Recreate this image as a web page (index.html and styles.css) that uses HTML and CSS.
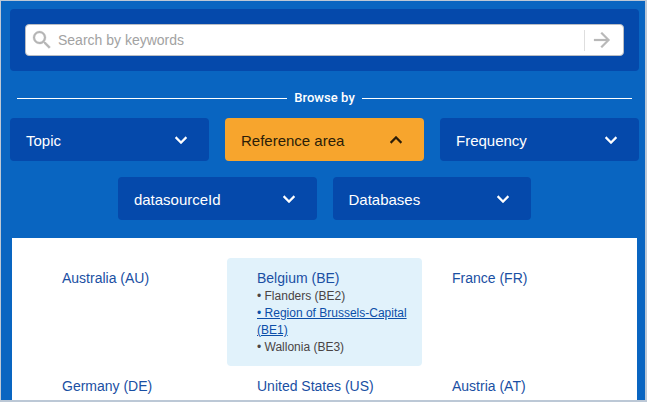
FILE: index.html
```
<!DOCTYPE html>
<html lang="en">
<head>
<meta charset="utf-8">
<title>Data Explorer</title>
<link rel="stylesheet" href="styles.css">
</head>
<body>
<main class="page">
  <form class="search">
    <div class="search-box">
      <svg class="search-icon" viewBox="0 0 24 24"><path d="M15.5 14h-.79l-.28-.27A6.47 6.47 0 0 0 16 9.5 6.5 6.5 0 1 0 9.5 16c1.61 0 3.09-.59 4.23-1.57l.27.28v.79l5 4.99L20.49 19l-4.99-5zm-6 0C7.01 14 5 11.99 5 9.5S7.01 5 9.5 5 14 7.01 14 9.5 11.99 14 9.5 14z"/></svg>
      <span class="placeholder">Search by keywords</span>
      <span class="submit"><svg viewBox="0 0 24 24"><path d="M12 4l-1.41 1.41L16.17 11H4v2h12.17l-5.58 5.59L12 20l8-8z"/></svg></span>
    </div>
  </form>
  <div class="divider"><span>Browse by</span></div>
  <nav class="facets">
    <div class="facet"><span>Topic</span><svg viewBox="0 0 24 24"><path d="M7.41 8.59L12 13.17l4.59-4.58L18 10l-6 6-6-6z"/></svg></div>
    <div class="facet active"><span>Reference area</span><svg viewBox="0 0 24 24"><path d="M12 8l-6 6 1.41 1.41L12 10.83l4.59 4.58L18 14z"/></svg></div>
    <div class="facet"><span>Frequency</span><svg viewBox="0 0 24 24"><path d="M7.41 8.59L12 13.17l4.59-4.58L18 10l-6 6-6-6z"/></svg></div>
    <div class="facet"><span>datasourceId</span><svg viewBox="0 0 24 24"><path d="M7.41 8.59L12 13.17l4.59-4.58L18 10l-6 6-6-6z"/></svg></div>
    <div class="facet"><span>Databases</span><svg viewBox="0 0 24 24"><path d="M7.41 8.59L12 13.17l4.59-4.58L18 10l-6 6-6-6z"/></svg></div>
  </nav>
  <section class="results">
    <div class="area"><div class="name">Australia (AU)</div></div>
    <div class="area selected">
      <div class="name">Belgium (BE)</div>
      <div class="sub">• Flanders (BE2)</div>
      <div class="sub link">• Region of Brussels-Capital (BE1)</div>
      <div class="sub">• Wallonia (BE3)</div>
    </div>
    <div class="area"><div class="name">France (FR)</div></div>
    <div class="area"><div class="name">Germany (DE)</div></div>
    <div class="area"><div class="name">United States (US)</div></div>
    <div class="area"><div class="name">Austria (AT)</div></div>
  </section>
</main>
</body>
</html>
```
FILE: styles.css
```
* { box-sizing: border-box; }
body { margin: 0; font-family: "Liberation Sans", Arial, sans-serif; }
.page {
  width: 647px;
  height: 402px;
  overflow: hidden;
  padding: 8px 7px 0 9px;
  border: 1px solid #bcc8d6;
  border-right-width: 2px;
  border-bottom-width: 2px;
  background: #0965c1;
}
.search {
  width: 629px;
  height: 62px;
  padding: 15px;
  border-radius: 4px;
  background: #0549ab;
}
.search-box {
  display: flex;
  align-items: center;
  width: 599px;
  height: 32px;
  padding-left: 4px;
  border: 1px solid #b9bdc4;
  border-radius: 4px;
  background: #fff;
}
.search-icon { width: 24px; height: 24px; fill: #b5b5b5; stroke: #b5b5b5; stroke-width: .3; }
.placeholder { flex: 1; margin-left: 4px; font-size: 14px; color: #a2a2a2; }
.submit {
  display: flex;
  align-items: center;
  height: 21px;
  width: 39px;
  padding-left: 5px;
  border-left: 1px solid #dedede;
}
.submit svg { flex: none; width: 24px; height: 24px; fill: #b9b9b9; stroke: #b9b9b9; stroke-width: .2; }
.divider {
  display: flex;
  align-items: center;
  gap: 7px;
  width: 615px;
  height: 16px;
  margin: 19px 0 0 7px;
  color: #fff;
  font: 500 13px/16px Roboto, sans-serif;
}
.divider span { letter-spacing: .05px; }
.divider::before, .divider::after { content: ""; flex: 1; height: 1px; background: #fff; }
.facets {
  display: flex;
  flex-wrap: wrap;
  justify-content: center;
  gap: 16px;
  width: 629px;
  margin-top: 12px;
}
.facet {
  display: flex;
  align-items: center;
  justify-content: space-between;
  width: 199px;
  height: 43px;
  padding: 0 16px;
  border-radius: 4px;
  background: #0549ab;
  color: #fff;
  font-size: 15px;
}
.facet:nth-child(n+4) { width: 198.6px; }
.facet span { padding-top: 2px; }
.facet svg { width: 24px; height: 24px; fill: currentColor; stroke: currentColor; stroke-width: .35; }
.facet.active { background: #f7a52d; color: #2b1d08; }
.results {
  display: grid;
  grid-template-columns: repeat(3, 195px);
  grid-auto-rows: 108px;
  width: 625px;
  height: 170px;
  margin: 18px 0 0 2px;
  padding: 20px;
  background: #fff;
}
.area { padding: 11px 0 0 30px; border-radius: 4px; }
.selected { background: #e1f2fb; }
.name { font-size: 14px; line-height: 19px; color: #1a4fa3; }
.sub { font-size: 12px; line-height: 17px; color: #494444; }
.link { color: #0b4ea8; text-decoration: underline; }
```
